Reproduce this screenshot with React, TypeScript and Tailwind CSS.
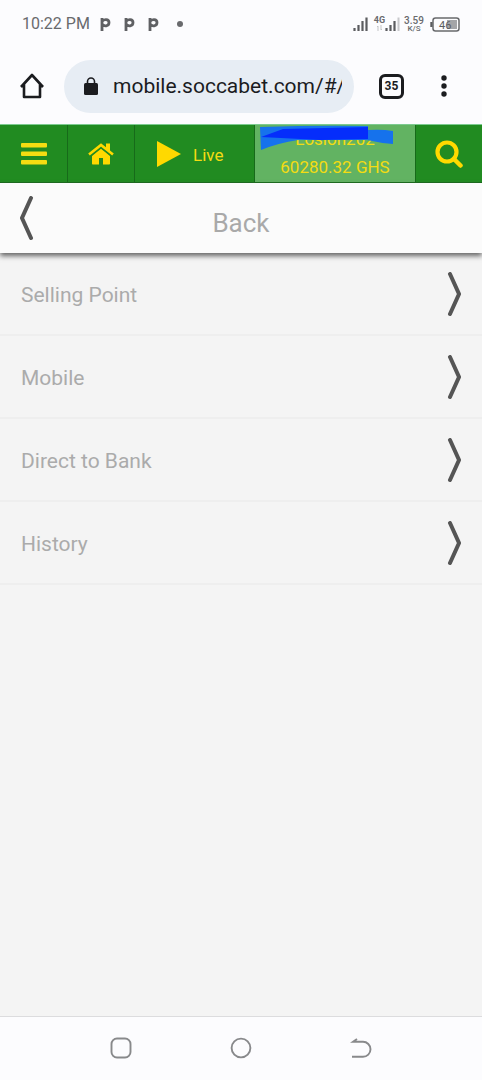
import React, { useState } from "react";

const methods = ["Selling Point", "Mobile", "Direct to Bank", "History"];

function PandaIcon() {
  return (
    <svg width="11" height="15" viewBox="0 0 11 15" aria-hidden="true">
      <path
        d="M2 1v13M2 4.5C3.5 2 9 1.6 9 5.5S4 9.8 2 7.2"
        fill="none"
        stroke="#5f6063"
        strokeWidth="2.8"
      />
    </svg>
  );
}

function StatusBar() {
  return (
    <div className="flex h-12 items-center justify-between px-[22px] text-[#696a6d]">
      <div className="flex items-center">
        <span className="text-base">10:22 PM</span>
        <div className="ml-[10px] flex gap-[13px]">
          <PandaIcon />
          <PandaIcon />
          <PandaIcon />
        </div>
        <span className="ml-[18px] size-[6px] rounded-full bg-[#696a6d]" />
      </div>
      <div className="flex items-center">
        <svg width="15" height="16" viewBox="0 0 15 16" aria-hidden="true">
          <path
            d="M1.5 12v3M5.5 9v6M9.5 5v10M13.5 1.5v13.5"
            stroke="#5b5c5f"
            strokeWidth="2.2"
          />
        </svg>
        <div className="ml-[6px] flex items-end">
          <div className="flex h-4 w-[11px] flex-col items-center">
            <span className="text-[9px] leading-[8px] font-bold">4G</span>
            <svg width="7" height="6" viewBox="0 0 7 6" className="mt-px" aria-hidden="true">
              <path
                d="M2 6V1L1 2M5 0v5l1-1"
                fill="none"
                stroke="#c3c4c6"
                strokeWidth="1"
              />
            </svg>
          </div>
          <svg width="15" height="16" viewBox="0 0 15 16" aria-hidden="true">
            <path d="M1.5 12v3M5.5 9v6M9.5 5v10" stroke="#5b5c5f" strokeWidth="2.2" />
            <path d="M13.5 1.5v13.5" stroke="#c8c9cc" strokeWidth="2" />
          </svg>
        </div>
        <div className="ml-1 flex w-5 flex-col items-center">
          <span className="text-[10px] leading-[9px] font-medium">3.59</span>
          <span className="text-[8px] leading-[7px] font-medium">K/S</span>
        </div>
        <svg width="30" height="15" viewBox="0 0 30 15" className="ml-[6px]" aria-hidden="true">
          <path d="M1.5 5v5" stroke="#5b5c5f" strokeWidth="2.4" />
          <rect
            x="3"
            y="1"
            width="26"
            height="13"
            rx="2.5"
            fill="none"
            stroke="#68696c"
            strokeWidth="1.5"
          />
          <rect x="17" y="3" width="10" height="9" fill="#a4a5a8" />
          <text x="9" y="11.5" fontSize="11" fill="#5b5c5f">
            46
          </text>
        </svg>
      </div>
    </div>
  );
}

function BrowserBar() {
  const [url, setUrl] = useState("mobile.soccabet.com/#/");

  return (
    <div className="flex h-19 items-center pr-[30px] pl-5 text-[#1b1c1f]">
      <button type="button" aria-label="Home page">
        <svg width="24" height="26" viewBox="0 0 24 26" aria-hidden="true">
          <path
            d="M1 14L12 2l11 12M4 11.500V24h16V11.500"
            fill="none"
            stroke="currentColor"
            strokeWidth="2.6"
            strokeLinejoin="round"
          />
        </svg>
      </button>
      <label className="ml-5 flex h-[53px] min-w-0 flex-1 items-center rounded-full bg-[#e7edf4] pr-3 pl-5">
        <svg width="14" height="18" viewBox="0 0 14 18" className="shrink-0" aria-hidden="true">
          <rect y="6" width="14" height="12" rx="1.5" fill="currentColor" />
          <path
            d="M3.5 7V4.5a3.5 3.5 0 0 1 7 0V7"
            fill="none"
            stroke="currentColor"
            strokeWidth="1.6"
          />
        </svg>
        <input
          aria-label="Address"
          className="ml-[15px] w-full min-w-0 pt-[2px] text-[21px] outline-none"
          value={url}
          onChange={(e) => setUrl(e.target.value)}
        />
      </label>
      <button
        type="button"
        aria-label="Tabs"
        className="ml-[25px] flex size-[25px] items-center justify-center rounded-md border-[3px] border-current text-xs font-bold"
      >
        35
      </button>
      <button type="button" aria-label="More" className="ml-8 flex w-4 justify-center">
        <svg width="6" height="22" viewBox="0 0 6 22" fill="currentColor" aria-hidden="true">
          <circle cx="3" cy="3" r="2.7" />
          <circle cx="3" cy="11" r="2.7" />
          <circle cx="3" cy="19" r="2.7" />
        </svg>
      </button>
    </div>
  );
}

function SiteNav() {
  return (
    <nav className="flex h-[59px] border-t border-b border-t-[#7ccb90] border-b-[#176a1a] bg-[#218b21] text-[17px] text-[#f4dc12]">
      <button
        type="button"
        aria-label="Menu"
        className="flex w-[68px] items-center justify-center border-r border-[#176a1a]"
      >
        <svg width="26" height="22" viewBox="0 0 26 22" fill="currentColor" aria-hidden="true">
          <rect y="0" width="26" height="4.5" rx="1" />
          <rect y="8.5" width="26" height="4.5" rx="1" />
          <rect y="17" width="26" height="4.5" rx="1" />
        </svg>
      </button>
      <a
        href="#home"
        aria-label="Home"
        className="flex w-[67px] items-center justify-center border-r border-[#176a1a]"
      >
        <svg width="26" height="22" viewBox="0 0 26 22" fill="#ffd900" aria-hidden="true">
          <path d="M13 5.8L4 13v7.5c0 .7.4 1 1 1h6v-6.5h4v6.5h6c.6 0 1-.3 1-1V13z" />
          <path d="M18 1h4v8l-4-3.500z" />
          <path d="M1 11.5L13 2l12 9.500" fill="none" stroke="#218b21" strokeWidth="5" />
          <path d="M1 11.5L13 2l12 9.500" fill="none" stroke="#ffd900" strokeWidth="2.6" />
          <path d="M18 0.500h4v8.500l-4-3.200z" />
        </svg>
      </a>
      <a href="#live" className="flex w-30 items-center border-r border-[#176a1a] pl-[21px]">
        <svg width="25" height="26" viewBox="0 0 25 26" aria-hidden="true">
          <path d="M1 0v26l24-13z" fill="#ffd900" />
        </svg>
        <span className="ml-3 pt-[5px]">Live</span>
      </a>
      <a
        href="#account"
        className="relative flex flex-1 flex-col items-center border-r border-[#176a1a] bg-[#62b362]"
      >
        <span className="leading-7">Losion202</span>
        <span className="leading-7">60280.32 GHS</span>
        <svg
          width="136"
          height="28"
          viewBox="0 0 136 28"
          className="absolute top-0 left-[5px]"
          aria-hidden="true"
        >
          <path
            d="M0 2Q60 0 108 1V5Q122 4 133 6V19Q120 18 107 15H38Q18 18 1 25z"
            fill="#1672ec"
          />
          <path d="M1 12L23 4L108 2V14L60 15L21 13z" fill="#052dfb" />
        </svg>
      </a>
      <button type="button" aria-label="Search" className="flex w-[66px] items-center justify-center">
        <svg width="28" height="28" viewBox="0 0 28 28" fill="none" aria-hidden="true">
          <circle cx="12" cy="12" r="9.5" stroke="#ffd900" strokeWidth="4.2" />
          <path
            d="M19 19l6.5 6.5"
            stroke="#ffd900"
            strokeWidth="4.5"
            strokeLinecap="round"
          />
        </svg>
      </button>
    </nav>
  );
}

function BackHeader() {
  return (
    <button
      type="button"
      className="relative grid h-[70px] w-full grid-cols-[1fr_auto_1fr] items-center bg-[#fbfbfb] px-5 shadow-[0_3px_5px_#666666]"
    >
      <svg width="14" height="44" viewBox="0 0 14 44" aria-hidden="true">
        <path
          d="M11 2L2 22l9 20"
          fill="none"
          stroke="#555555"
          strokeWidth="4"
          strokeLinecap="round"
        />
      </svg>
      <span className="pt-[10px] text-[26px] text-[#a9a9a9]">Back</span>
    </button>
  );
}

function MethodRow({ label }: { label: string }) {
  return (
    <li>
      <a
        href="#withdraw"
        className="flex h-[83px] items-center justify-between border-b-2 border-[#eeeeee] px-[21px] text-[21px] text-[#ababab]"
      >
        <span className="pt-1">{label}</span>
        <svg width="14" height="44" viewBox="0 0 14 44" aria-hidden="true">
          <path
            d="M3 2l9 20l-9 20"
            fill="none"
            stroke="#555555"
            strokeWidth="4"
            strokeLinecap="round"
          />
        </svg>
      </a>
    </li>
  );
}

function SystemNav() {
  return (
    <div className="flex h-16 items-center justify-center gap-[98px] border-t border-[#dcdcde] bg-[#fcfcfe] pb-[2px] text-[#88898b]">
      <button type="button" aria-label="Recent apps">
        <svg width="22" height="22" viewBox="0 0 22 22" fill="none" aria-hidden="true">
          <rect x="1.5" y="1.5" width="19" height="19" rx="5.5" stroke="currentColor" strokeWidth="1.9" />
        </svg>
      </button>
      <button type="button" aria-label="Home screen">
        <svg width="22" height="22" viewBox="0 0 22 22" fill="none" aria-hidden="true">
          <circle cx="11" cy="11" r="9.4" stroke="currentColor" strokeWidth="1.9" />
        </svg>
      </button>
      <button type="button" aria-label="Go back">
        <svg width="22" height="22" viewBox="0 0 22 22" fill="none" aria-hidden="true">
          <path
            d="M7 2L3 4.8h10a7.5 7.5 0 0 1 0 15H2"
            stroke="currentColor"
            strokeWidth="1.9"
          />
        </svg>
      </button>
    </div>
  );
}

export default function App() {
  return (
    <div className="flex min-h-screen flex-col bg-[#f4f4f4] font-['Roboto',sans-serif]">
      <header className="bg-[#fcfcfe]">
        <StatusBar />
        <BrowserBar />
      </header>
      <SiteNav />
      <BackHeader />
      <main className="flex-1">
        <ul>
          {methods.map((label) => (
            <MethodRow key={label} label={label} />
          ))}
        </ul>
      </main>
      <SystemNav />
    </div>
  );
}
